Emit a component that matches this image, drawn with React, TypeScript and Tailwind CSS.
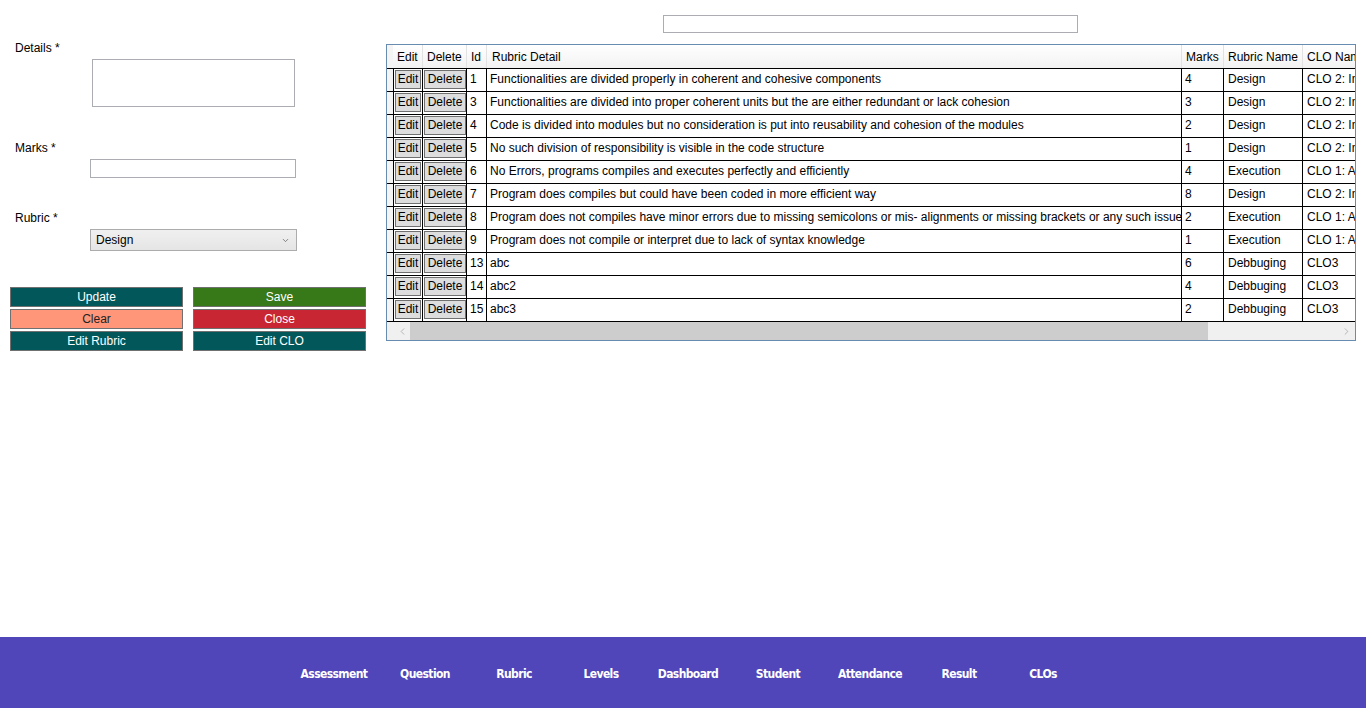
import { ChevronDown, ChevronLeft, ChevronRight } from 'lucide-react'

const rows = [
  { id: 1, detail: 'Functionalities are divided properly in coherent and cohesive components', marks: 4, rubric: 'Design', clo: 'CLO 2: Implement' },
  { id: 3, detail: 'Functionalities are divided into proper coherent units but the are either redundant or lack cohesion', marks: 3, rubric: 'Design', clo: 'CLO 2: Implement' },
  { id: 4, detail: 'Code is divided into modules but no consideration is put into reusability and cohesion of the modules', marks: 2, rubric: 'Design', clo: 'CLO 2: Implement' },
  { id: 5, detail: 'No such division of responsibility is visible in the code structure', marks: 1, rubric: 'Design', clo: 'CLO 2: Implement' },
  { id: 6, detail: 'No Errors, programs compiles and executes perfectly and efficiently', marks: 4, rubric: 'Execution', clo: 'CLO 1: Apply' },
  { id: 7, detail: 'Program does compiles but could have been coded in more efficient way', marks: 8, rubric: 'Design', clo: 'CLO 2: Implement' },
  { id: 8, detail: 'Program does not compiles have minor errors due to missing semicolons or mis- alignments or missing brackets or any such issue', marks: 2, rubric: 'Execution', clo: 'CLO 1: Apply' },
  { id: 9, detail: 'Program does not compile or interpret due to lack of syntax knowledge', marks: 1, rubric: 'Execution', clo: 'CLO 1: Apply' },
  { id: 13, detail: 'abc', marks: 6, rubric: 'Debbuging', clo: 'CLO3' },
  { id: 14, detail: 'abc2', marks: 4, rubric: 'Debbuging', clo: 'CLO3' },
  { id: 15, detail: 'abc3', marks: 2, rubric: 'Debbuging', clo: 'CLO3' },
]

const navItems = [
  { label: 'Assessment', w: 'w-[92px]' },
  { label: 'Question', w: 'w-[90px]' },
  { label: 'Rubric', w: 'w-[88px]' },
  { label: 'Levels', w: 'w-[86px]' },
  { label: 'Dashboard', w: 'w-[88px]' },
  { label: 'Student', w: 'w-[92px]' },
  { label: 'Attendance', w: 'w-[92px]' },
  { label: 'Result', w: 'w-[86px]' },
  { label: 'CLOs', w: 'w-[82px]' },
]

function CellButton({ label, w }: { label: string; w: string }) {
  return (
    <button className={`${w} h-[19px] mt-[1px] bg-[#dddddd] border border-[#707070] text-[12px] leading-[17px] text-black`}>
      {label}
    </button>
  )
}

export default function App() {
  return (
    <div className="h-[708px] flex flex-col bg-white text-black text-[12px] font-['Liberation_Sans',Arial,sans-serif] overflow-hidden">
      <div className="flex-1 flex">
        {/* form */}
        <div className="w-[386px] shrink-0 pt-[40px]">
          <div className="pl-[15px] leading-[16px]">Details *</div>
          <textarea className="block mt-[3px] ml-[92px] w-[203px] h-[48px] border border-[#abadb3] resize-none outline-none" />
          <div className="pl-[15px] mt-[33px] leading-[16px]">Marks *</div>
          <input className="block mt-[3px] ml-[90px] w-[206px] h-[19px] border border-[#abadb3] outline-none" />
          <div className="pl-[15px] mt-[32px] leading-[16px]">Rubric *</div>
          <div className="mt-[3px] ml-[90px] w-[207px] h-[22px] border border-[#acacac] bg-gradient-to-b from-[#f0f0f0] to-[#e5e5e5] flex items-center pl-[5px] pr-[6px]">
            <span className="flex-1">Design</span>
            <ChevronDown className="w-[9px] h-[9px] text-[#606060]" strokeWidth={2} />
          </div>
          <div className="mt-[36px] ml-[10px] grid grid-cols-[173px_173px] gap-x-[10px] gap-y-[2px]">
            <button className="h-[20px] bg-[#02575b] border border-[#707070] text-white leading-[18px]">Update</button>
            <button className="h-[20px] bg-[#377818] border border-[#707070] text-white leading-[18px]">Save</button>
            <button className="h-[20px] bg-[#ff9679] border border-[#707070] text-[#222] leading-[18px]">Clear</button>
            <button className="h-[20px] bg-[#c82632] border border-[#707070] text-white leading-[18px]">Close</button>
            <button className="h-[20px] bg-[#02575b] border border-[#707070] text-white leading-[18px]">Edit Rubric</button>
            <button className="h-[20px] bg-[#02575b] border border-[#707070] text-white leading-[18px]">Edit CLO</button>
          </div>
        </div>

        {/* grid side */}
        <div className="flex-1 min-w-0">
          <input className="block mt-[15px] ml-[277px] w-[415px] h-[18px] border border-[#abadb3] outline-none" />
          <div className="mt-[11px] w-[970px] h-[297px] border border-[#688caf] overflow-hidden flex flex-col">
            <div className="flex h-[24px] shrink-0 border-b border-black bg-gradient-to-b from-white to-[#f2f2f2] whitespace-nowrap">
              <div className="w-[6px] shrink-0 bg-[#f4f4f4]" />
              <div className="w-[30px] shrink-0 pl-[4px] leading-[25px] border-r border-[#e2e2e2]">Edit</div>
              <div className="w-[44px] shrink-0 pl-[4px] leading-[25px] border-r border-[#e2e2e2]">Delete</div>
              <div className="w-[20px] shrink-0 pl-[4px] leading-[25px] border-r border-[#e2e2e2]">Id</div>
              <div className="w-[695px] shrink-0 pl-[5px] leading-[25px] border-r border-[#e2e2e2]">Rubric Detail</div>
              <div className="w-[42px] shrink-0 pl-[4px] leading-[25px] border-r border-[#e2e2e2]">Marks</div>
              <div className="w-[79px] shrink-0 pl-[4px] leading-[25px] border-r border-[#e2e2e2]">Rubric Name</div>
              <div className="w-[200px] shrink-0 pl-[4px] leading-[25px]">CLO Name</div>
            </div>
            {rows.map(r => (
              <div key={r.id} className="flex h-[23px] shrink-0 border-b border-black whitespace-nowrap">
                <div className="w-[7px] shrink-0 bg-[#f4f4f4] border-r border-black" />
                <div className="w-[29px] shrink-0 pl-[1px] border-r border-black">
                  <CellButton label="Edit" w="w-[26px]" />
                </div>
                <div className="w-[44px] shrink-0 pl-[1px] border-r border-black">
                  <CellButton label="Delete" w="w-[42px]" />
                </div>
                <div className="w-[20px] shrink-0 pl-[3px] leading-[20px] border-r border-black overflow-hidden">{r.id}</div>
                <div className="w-[695px] shrink-0 pl-[3px] leading-[20px] border-r border-black overflow-hidden">{r.detail}</div>
                <div className="w-[42px] shrink-0 pl-[3px] leading-[20px] border-r border-black">{r.marks}</div>
                <div className="w-[79px] shrink-0 pl-[4px] leading-[20px] border-r border-black">{r.rubric}</div>
                <div className="w-[200px] shrink-0 pl-[4px] leading-[20px]">{r.clo}</div>
              </div>
            ))}
            <div className="flex h-[18px] shrink-0 bg-[#f0f0f0] items-stretch">
              <div className="w-[23px] shrink-0 flex items-center justify-end pr-[2px]">
                <ChevronLeft className="w-[11px] h-[11px] text-[#9a9a9a]" strokeWidth={1.5} />
              </div>
              <div className="w-[798px] shrink-0 bg-[#cdcdcd]" />
              <div className="flex-1" />
              <div className="w-[17px] shrink-0 flex items-center justify-center">
                <ChevronRight className="w-[11px] h-[11px] text-[#9a9a9a]" strokeWidth={1.5} />
              </div>
            </div>
          </div>
        </div>
      </div>

      {/* footer nav */}
      <div className="h-[71px] shrink-0 bg-[#5046b9] flex items-center justify-center pl-[6px] pt-[2px]">
        {navItems.map(n => (
          <div key={n.label} className={`${n.w} text-center text-white font-bold text-[12px] tracking-[-0.6px] font-['Liberation_Sans_Narrow','DejaVu_Sans_Condensed',sans-serif]`}>
            {n.label}
          </div>
        ))}
      </div>
    </div>
  )
}
